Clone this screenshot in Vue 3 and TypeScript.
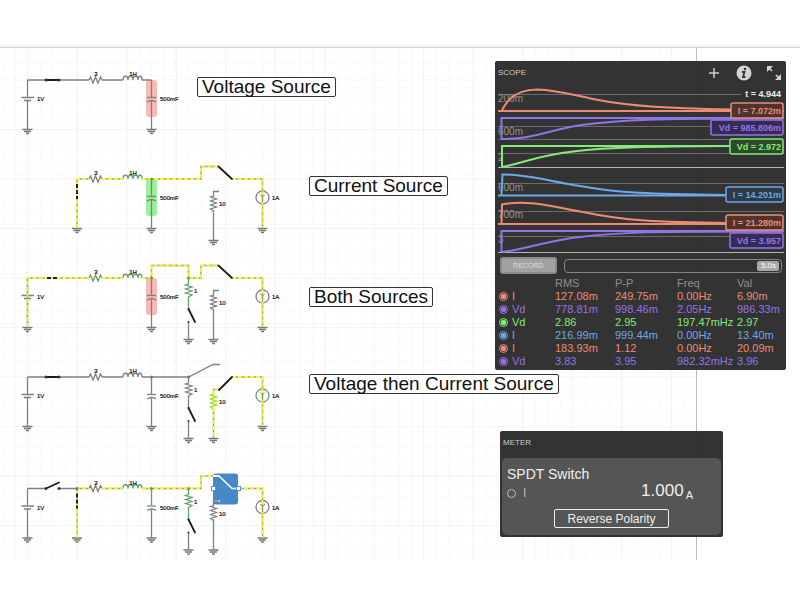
<script setup lang="ts">
type Tone = 'grey' | 'green'
interface Circuit {
  id: string
  y: number
  battery: boolean
  mainSwitch: 'closed' | 'open' | 'none'
  shunt: boolean
  highlight?: 'red' | 'green'
  load: boolean
  wires: string
  live: string
  darkDash?: string
  blade?: string
  coil: Tone
  cap: Tone
  branch: Tone
  tail: boolean
  tailLive: boolean
  source: Tone
  selected?: boolean
}

// Every circuit is drawn around its own main wire, which is y = 0.
const circuits: Circuit[] = [
  { id: 'voltage', y: 80, battery: true, mainSwitch: 'closed', shunt: false, highlight: 'red', load: false,
    wires: 'M27.5 0H89M102 0H123M142 0H151.5', live: '', coil: 'grey', cap: 'grey', branch: 'grey',
    tail: false, tailLive: false, source: 'grey' },
  { id: 'current', y: 179, battery: false, mainSwitch: 'none', shunt: true, highlight: 'green', load: false,
    wires: '', live: 'M77 49V0H89M102 0H123M142 0H201V-12.5H218M232 0H262.5V49', darkDash: 'M77 5V20',
    blade: 'M218.5 -12.5L232 0', coil: 'green', cap: 'grey', branch: 'grey', tail: true, tailLive: false, source: 'grey' },
  { id: 'both', y: 278, battery: true, mainSwitch: 'none', shunt: false, highlight: 'red', load: true,
    wires: '', live: 'M27.5 49V0H89M102 0H123M142 0H151.5V-12.5H188.5V0H201V-12.5H218M232 0H262.5V49',
    darkDash: 'M47 0H59', blade: 'M218.5 -12.5L232 0', coil: 'green', cap: 'grey', branch: 'green',
    tail: true, tailLive: false, source: 'grey' },
  { id: 'sequence', y: 377, battery: true, mainSwitch: 'closed', shunt: false, load: true,
    wires: 'M27.5 0H89M102 0H123M142 0H188.5L213 -12.5H220', live: 'M219 12.5H213.5V17M213.5 31V61M232 0H262.5V49',
    blade: 'M219 13L232 0', coil: 'grey', cap: 'grey', branch: 'grey', tail: true, tailLive: true, source: 'green' },
  { id: 'combined', y: 488.5, battery: true, mainSwitch: 'open', shunt: true, load: true,
    wires: 'M27.5 0H46M59 0H77', live: 'M77 49V0H89M102 0H123M142 0H201V-12.5H218M238 0H262.5V49',
    darkDash: 'M77 5V20', coil: 'green', cap: 'green', branch: 'green', tail: true, tailLive: false, source: 'grey',
    selected: true },
]

interface Trace {
  colour: string
  base: string
  curve: string
}
const traces: Trace[] = [
  { colour: 'salmon', base: 'M498 111H784', curve: 'M502 110C509 96 521 89.5 537 89.5C557 90 574 95 593 99C633 107 670 108 732 109.5' },
  { colour: 'purple', base: 'M501.5 139V118H784', curve: 'M501.5 139C535 139 552 129 581 125C622 119.5 650 118.5 784 118.5' },
  { colour: 'green', base: 'M502 167V146H730', curve: 'M502 167C523 163 540 155 573 151.5C610 147 650 146.5 730 146' },
  { colour: 'blue', base: 'M498 195.5H726', curve: 'M501.5 195L502.5 174.5C525 174 549 181 580 186C618 193 650 194 726 195' },
  { colour: 'salmon', base: 'M498 224H730', curve: 'M501.5 224L502 204.5C529 199 559 208 583 212C625 221 658 222 730 223' },
  { colour: 'purple', base: 'M501.5 252V231H784', curve: 'M501.5 252C524 250 545 241 580 237C618 232 650 231.5 784 231.5' },
]
const axisLabels = [
  { text: '200m', y: 102 }, { text: '600m', y: 135 }, { text: '2', y: 161 },
  { text: '600m', y: 191 }, { text: '700m', y: 218 }, { text: '3', y: 243 },
]
const readouts = [
  { text: 'I = 7.072m', x: 731, y: 103, colour: 'salmon' },
  { text: 'Vd = 985.806m', x: 711, y: 120, colour: 'purple' },
  { text: 'Vd = 2.972', x: 730, y: 139, colour: 'green' },
  { text: 'I = 14.201m', x: 726, y: 187, colour: 'blue' },
  { text: 'Vd = 3.957', x: 730, y: 233, colour: 'purple' },
  { text: 'I = 21.280m', x: 726, y: 215, colour: 'salmon' },
]
const measurements = [
  { name: 'I', colour: 'salmon', values: ['127.08m', '249.75m', '0.00Hz', '6.90m'] },
  { name: 'Vd', colour: 'purple', values: ['778.81m', '998.46m', '2.05Hz', '986.33m'] },
  { name: 'Vd', colour: 'green', values: ['2.86', '2.95', '197.47mHz', '2.97'] },
  { name: 'I', colour: 'blue', values: ['216.99m', '999.44m', '0.00Hz', '13.40m'] },
  { name: 'I', colour: 'salmon', values: ['183.93m', '1.12', '0.00Hz', '20.09m'] },
  { name: 'Vd', colour: 'purple', values: ['3.83', '3.95', '982.32mHz', '3.96'] },
]
</script>

<template>
  <main class="page">
    <div class="workspace">
      <svg class="schematic" aria-label="Circuit schematics">
        <defs>
          <pattern id="minor" x="2.7" y="5.7" width="12.38" height="12.38" patternUnits="userSpaceOnUse">
            <path d="M0 .5H12.38M.5 0V12.38" class="minor" />
          </pattern>
          <pattern id="major" x="27" y="34.5" width="49.52" height="49.52" patternUnits="userSpaceOnUse">
            <path d="M0 .5H49.52M.5 0V49.52" class="major" />
          </pattern>
          <symbol id="ground" viewBox="-6 -1 12 8" width="12" height="8" overflow="visible">
            <path d="M-5 .5H5M-3.5 2.5H3.5M-1.5 4.5H1.5" class="ground" />
          </symbol>
        </defs>
        <rect width="696" height="515" fill="url(#minor)" />
        <rect width="696" height="515" fill="url(#major)" />
        <rect width="100%" height="2" class="edge-band" />
        <path d="M0 2.5H1600" class="top-edge" />
        <path d="M696.5 2V515" class="side-edge" />

        <g transform="translate(0 -45)">
          <g v-for="c in circuits" :key="c.id" :transform="`translate(0 ${c.y})`">
            <rect v-if="c.highlight" x="146" y="0" width="11" height="37" rx="3" :class="['glow', c.highlight]" />
            <g v-if="c.selected">
              <rect x="213" y="-15" width="25" height="31" rx="3" class="selection" />
              <path d="M213 -12.5H219L232 0H238M214 12.5H220" class="selection-line" />
            </g>

            <path :d="c.wires" class="wire" />
            <path d="M89 0L90.5 -3L93 3L95.5 -3L98 3L100.5 -3L102 0" :class="['part', c.coil === 'green' && c.highlight === 'red' ? 'green' : 'grey']" />
            <path d="M123 0C123 -5 128 -5 128 0C128 -5 133 -5 133 0C133 -5 138 -5 138 0C138 -5 142 -5 142 0" :class="['part', c.coil]" />
            <text x="96" y="-4" text-anchor="middle">3</text>
            <text x="133" y="-4" text-anchor="middle">1H</text>

            <g v-if="c.battery">
              <path d="M27.5 0V17M27.5 21V49" class="wire" />
              <path d="M21.5 17.5H34M24 20.5H31" class="wire" />
              <text x="37" y="21">1V</text>
              <use href="#ground" x="21.5" y="48" />
            </g>
            <use v-if="c.shunt" href="#ground" x="71" y="48" />

            <g v-if="c.mainSwitch !== 'none'">
              <path :d="c.mainSwitch === 'closed' ? 'M46 0H59' : 'M46 0L59 -6'" class="blade" />
              <circle cx="46" r="1.5" class="pin" />
              <circle cx="59" r="1.5" class="pin" />
            </g>

            <path d="M151.5 0V17" :class="['part', c.cap]" />
            <path d="M151.5 21V49" class="wire" />
            <path d="M147 17.5H156" :class="['part', c.cap]" />
            <path d="M147 22Q151.5 19 156 22" class="wire" />
            <text x="160" y="21">500mF</text>
            <use href="#ground" x="145.5" y="48" />

            <g v-if="c.load">
              <path d="M188.5 0V6L185.5 7L192 9L185.5 11L192 13L185.5 15L192 17L188.5 19V31" :class="['part', c.branch]" />
              <path d="M188.5 44V61" class="wire" />
              <path d="M188.5 31L195 44" class="blade" />
              <circle cx="188.5" cy="31" r="1" class="pin" />
              <circle cx="188.5" cy="44" r="1" class="pin" />
              <text x="194" y="15">1</text>
              <use href="#ground" x="182.5" y="60" />
            </g>

            <g v-if="c.tail">
              <path v-if="!c.tailLive" d="M219 12.5H213.5V18M213.5 31V61" class="wire" />
              <path d="M213.5 17L210.5 18L216.5 20L210.5 22L216.5 24L210.5 26L216.5 28L210.5 30L213.5 32" :class="['part', c.tailLive ? 'lime' : 'grey']" />
              <text x="219" y="27">10</text>
              <use href="#ground" x="207.5" y="60" />
              <circle cx="262.5" cy="18.5" r="6.5" :class="['part', c.source]" />
              <text x="272" y="21">1A</text>
              <use href="#ground" x="256.5" y="48" />
            </g>

            <path v-if="c.live" :d="c.live" class="live-base" />
            <path v-if="c.live" :d="c.live" class="live" />
            <path v-if="c.darkDash" :d="c.darkDash" class="dark-dash" />
            <path v-if="c.selected" d="M213 -12.5H219" class="selection-line" />
            <path v-if="c.tail" d="M260 15.5L262.5 18L265 15.5M262.5 18V22" class="arrow" />
            <path v-if="c.blade" :d="c.blade" class="blade" />
            <circle v-if="c.tail" cx="151.5" r="1.5" :class="['node', c.coil]" />
            <circle v-if="c.load" cx="188.5" r="1.5" :class="['node', c.branch]" />
            <g v-if="c.selected">
              <circle cx="77" r="1.5" class="node" />
              <rect x="211.5" y="-2" width="4" height="4" class="handle" />
              <rect x="236.5" y="-2" width="4" height="4" class="handle" />
            </g>
          </g>
        </g>
      </svg>

      <p class="note note-voltage">Voltage Source</p>
      <p class="note note-current">Current Source</p>
      <p class="note note-both">Both Sources</p>
      <p class="note note-sequence">Voltage then Current Source</p>

      <section class="panel scope">
        <header class="panel-head">
          <h2>SCOPE</h2>
          <button type="button" class="icon" aria-label="Add trace">
            <svg width="14" height="12"><path d="M6 1V11M1 6H11" class="icon-line" /></svg>
          </button>
          <button type="button" class="icon" aria-label="Information">
            <svg width="16" height="16">
              <circle cx="8" cy="8" r="7.5" class="icon-disc" />
              <circle cx="9" cy="4" r="1.3" class="icon-ink" />
              <path d="M6 7H8.5L7 12H9.5" class="icon-i" />
            </svg>
          </button>
          <button type="button" class="icon" aria-label="Expand">
            <svg width="16" height="16">
              <path d="M1 1H7L1 7ZM15 15H9L15 9Z" class="icon-disc" />
              <path d="M3 3L6 6M10 10L13 13" class="icon-arrow" />
            </svg>
          </button>
        </header>

        <svg class="plot" viewBox="496 86 289 169" aria-label="Scope traces">
          <path d="M498 94.5H741M498 126.5H784M498 139.5H784M498 153.5H784M498 183.5H784M498 211.5H784M498 236.5H784" class="rule" />
          <path d="M498 167.5H784M498 252.5H784" class="rule strong" />
          <text v-for="(a, i) in axisLabels" :key="i" x="498" :y="a.y" class="axis">{{ a.text }}</text>
          <g v-for="(t, i) in traces" :key="i" :class="['trace', t.colour]">
            <path :d="t.base" />
            <path :d="t.curve" />
          </g>
          <text x="781" y="97" class="time" text-anchor="end">t = 4.944</text>
          <g v-for="r in readouts" :key="r.text" :class="['readout', r.colour]">
            <rect :x="r.x" :y="r.y" :width="783 - r.x" height="15" rx="2" />
            <text x="781" :y="r.y + 11" text-anchor="end">{{ r.text }}</text>
          </g>
        </svg>

        <div class="controls">
          <button type="button" class="record">RECORD</button>
          <label class="span">
            <input type="range" min="0" max="5" step="0.1" value="5" aria-label="Time span" />
            <output>5.0s</output>
          </label>
        </div>

        <table>
          <colgroup>
            <col class="c-name" /><col class="c-rms" /><col class="c-pp" /><col class="c-freq" /><col />
          </colgroup>
          <thead>
            <tr><th></th><th>RMS</th><th>P-P</th><th>Freq</th><th>Val</th></tr>
          </thead>
          <tbody>
            <tr v-for="(m, i) in measurements" :key="i" :class="m.colour">
              <td>
                <label class="channel"><input type="checkbox" checked />{{ m.name }}</label>
              </td>
              <td v-for="(v, j) in m.values" :key="j">{{ v }}</td>
            </tr>
          </tbody>
        </table>
      </section>

      <section class="panel meter">
        <h2>METER</h2>
        <div class="card">
          <h3>SPDT Switch</h3>
          <div class="reading">
            <label class="channel plain"><input type="checkbox" />I</label>
            <span class="value">1.000<small>A</small></span>
          </div>
          <button type="button" class="reverse">Reverse Polarity</button>
        </div>
      </section>
    </div>
  </main>
</template>

<style>
body {
  background: #fff;
}
</style>

<style scoped>
* {
  box-sizing: border-box;
}
.page {
  padding-top: 45px;
  font-family: "Liberation Sans", Arial, sans-serif;
}
.workspace {
  position: relative;
}
h2,
h3,
p {
  margin: 0;
  font-weight: 400;
}
button {
  font-family: inherit;
  padding: 0;
}
.schematic {
  display: block;
  width: 100%;
  height: 515px;
  fill: none;
}
.minor { stroke: #f9f9f9; }
.major { stroke: #f3f3f3; }
.edge-band { fill: #f5f5f5; }
.top-edge { stroke: #d4d4d4; }
.side-edge { stroke: #bbb; }
.schematic text {
  fill: #111;
  stroke: #111;
  stroke-width: 0.2px;
  font-size: 6px;
}
.wire,
.part.grey { stroke: #808080; stroke-width: 1.3; }
.part.green { stroke: #62a06f; stroke-width: 1.3; }
.part.lime { stroke: #a9e332; stroke-width: 1.5; }
.ground { stroke: #7d7676; stroke-width: 1.4; }
.glow.red { fill: #f8bab2; }
.glow.green { fill: #9cf29c; }
.blade { stroke: #1c1c1c; stroke-width: 1.8; stroke-linecap: round; }
.pin { fill: #333; }
.node { fill: #777; }
.node.green { fill: #719a42; }
.live-base { stroke: #9c9c7c; stroke-width: 1.4; }
.live { stroke: #f8f52b; stroke-width: 1.8; stroke-dasharray: 4 2; }
.dark-dash { stroke: #222; stroke-width: 2; stroke-dasharray: 4 2; }
.arrow { stroke: #99983e; }
.selection { fill: #4788c7; }
.selection-line { stroke: #fff; stroke-width: 1.5; }
.handle { fill: #fff; stroke: #5796cc; }

.note {
  position: absolute;
  padding: 0 4px;
  border: 1px solid #333;
  border-radius: 2px;
  background: #fff;
  color: #111;
  font-size: 19px;
  line-height: 18px;
  white-space: nowrap;
}
.note-voltage { left: 197px; top: 32px; }
.note-current { left: 309px; top: 131px; }
.note-both { left: 309px; top: 242px; }
.note-sequence { left: 309px; top: 329px; }

.panel {
  position: absolute;
  border-radius: 2px;
  background: rgba(44, 44, 44, 0.97);
  color: #ddd;
}
.panel h2 {
  color: #ccc;
  font-size: 8px;
  line-height: 10px;
}
.scope {
  left: 495px;
  top: 16px;
  width: 291px;
  padding: 0 1px 2px;
}
.panel-head {
  display: flex;
  align-items: center;
  gap: 14px;
  height: 25px;
  padding: 0 3px 2px 2px;
}
.panel-head h2 {
  flex: 1;
}
.icon {
  display: flex;
  border: 0;
  background: none;
}
.icon-line { stroke: #ccc; stroke-width: 1.5; }
.icon-disc { fill: #d4d4d4; }
.icon-ink { fill: #333; }
.icon-i { fill: none; stroke: #333; stroke-width: 1.8; }
.icon-arrow { stroke: #d4d4d4; stroke-width: 1.7; }

.salmon { --tone: #ec8c75; --shade: #4d342f; }
.purple { --tone: #9274ea; --shade: #352c55; }
.green { --tone: #82ec76; --shade: #2d482b; }
.blue { --tone: #6ca8ec; --shade: #303843; }
.plot {
  display: block;
  width: 100%;
}
.rule { stroke: #6b6b6b; }
.rule.strong { stroke: #b5b5b5; }
.axis { fill: #949494; font-size: 10px; }
.trace path { fill: none; stroke: var(--tone); stroke-width: 2; }
.time { fill: #eee; font-size: 9px; font-weight: 700; }
.readout rect { fill: var(--shade); stroke: var(--tone); stroke-width: 1.5; }
.readout text { fill: var(--tone); font-size: 9px; font-weight: 700; }

.controls {
  display: flex;
  align-items: center;
  gap: 7px;
  padding: 2px 3px 3px 4px;
}
.record {
  width: 57px;
  height: 17px;
  border: 2px solid #8b8b8b;
  border-radius: 3px;
  background: #a2a2a2;
  color: #ddd;
  font-size: 7px;
}
.span {
  position: relative;
  display: flex;
  flex: 1;
}
.span input {
  appearance: none;
  width: 100%;
  height: 14px;
  margin: 0;
  padding: 0 2px;
  border: 1px solid #858585;
  border-radius: 4px;
  background: transparent;
}
.span input::-webkit-slider-thumb {
  appearance: none;
  width: 22px;
  height: 10px;
  border-radius: 2px;
  background: #a8a8a8;
}
.span output {
  position: absolute;
  right: 6px;
  top: 2px;
  color: #fff;
  font-size: 8px;
  line-height: 10px;
  pointer-events: none;
}
table {
  width: 100%;
  table-layout: fixed;
  border-collapse: collapse;
  font-size: 11px;
  line-height: 13px;
}
.c-name { width: 59px; }
.c-rms { width: 60px; }
.c-pp { width: 62px; }
.c-freq { width: 60px; }
th,
td {
  padding: 0;
  color: var(--tone);
  font-weight: 400;
  text-align: left;
  white-space: nowrap;
}
th {
  color: #8f8f8f;
}
.channel {
  display: flex;
  align-items: center;
  gap: 4px;
  padding-left: 3px;
}
.channel input {
  appearance: none;
  width: 9px;
  height: 9px;
  margin: 0;
  border: 1px solid var(--tone);
  border-radius: 50%;
}
.channel input:checked {
  background: radial-gradient(circle, var(--tone) 45%, #323232 65%);
}

.meter {
  left: 500px;
  top: 386px;
  width: 223px;
  padding: 7px 2px 2px;
}
.meter h2 {
  padding-left: 1px;
}
.card {
  margin-top: 10px;
  padding: 7px 5px;
  border-radius: 5px;
  background: rgba(94, 94, 94, 0.8);
  color: #f0f0f0;
}
.card h3 {
  font-size: 14px;
  line-height: 18px;
}
.reading {
  display: flex;
  align-items: center;
  justify-content: space-between;
  height: 20px;
  padding-right: 23px;
}
.plain {
  --tone: #bbb;
  gap: 7px;
  padding: 0;
  color: #bbb;
  font-size: 12px;
}
.plain input {
  width: 9px;
  height: 9px;
}
.value {
  font-size: 17px;
  line-height: 18px;
}
.value small {
  margin-left: 2px;
  font-size: 11px;
  vertical-align: -3px;
}
.reverse {
  display: block;
  margin: 6px auto 0;
  width: 115px;
  height: 19px;
  border: 1px solid #eee;
  border-radius: 2px;
  background: transparent;
  color: #eee;
  font-size: 12px;
}
</style>
